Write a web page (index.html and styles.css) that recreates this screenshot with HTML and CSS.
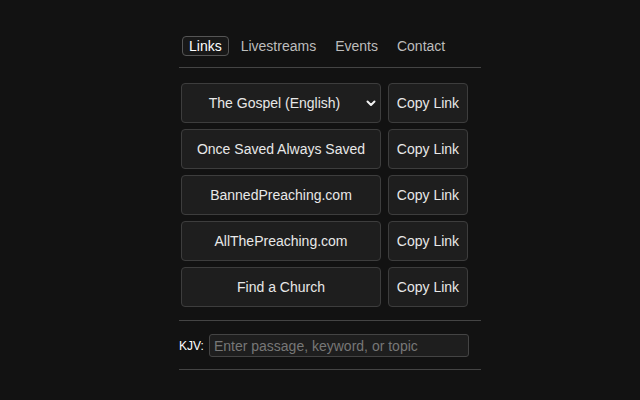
FILE: index.html
```html
<!DOCTYPE html>
<html lang="en">
<head>
    <meta charset="UTF-8">
    <meta name="viewport" content="width=device-width, initial-scale=1.0">
    <title>Preaching Links</title>
    <link rel="stylesheet" href="styles.css">
</head>
<body>

    <div class="popup">
        <nav class="tabs">
            <a href="#" class="tab active">Links</a>
            <a href="#" class="tab">Livestreams</a>
            <a href="#" class="tab">Events</a>
            <a href="#" class="tab">Contact</a>
        </nav>
        <hr>

        <div class="links">
            <div class="row">
                <span class="select-wrap">
                    <select class="btn main">
                        <option>The Gospel (English)</option>
                        <option>The Gospel (Spanish)</option>
                    </select>
                    <!-- chevron drawn over the select -->
                    <svg class="chevron" width="10" height="7" viewBox="0 0 10 7">
                        <path d="M1.5 1.5 L5 5 L8.5 1.5" fill="none" stroke="#f2f2f2" stroke-width="2" stroke-linecap="round" stroke-linejoin="round"/>
                    </svg>
                </span>
                <button class="btn copy">Copy Link</button>
            </div>
            <div class="row">
                <button class="btn main">Once Saved Always Saved</button>
                <button class="btn copy">Copy Link</button>
            </div>
            <div class="row">
                <button class="btn main">BannedPreaching.com</button>
                <button class="btn copy">Copy Link</button>
            </div>
            <div class="row">
                <button class="btn main">AllThePreaching.com</button>
                <button class="btn copy">Copy Link</button>
            </div>
            <div class="row">
                <button class="btn main">Find a Church</button>
                <button class="btn copy">Copy Link</button>
            </div>
        </div>

        <hr class="mid">
        <div class="search">
            <label for="kjv">KJV:</label>
            <input type="text" id="kjv" placeholder="Enter passage, keyword, or topic">
        </div>
        <hr class="end">
    </div>

</body>
</html>
```

FILE: styles.css
```css
body {
    margin: 0;
    background-color: #121212;
    color: #e6e6e6;
    font-family: "Liberation Sans", Arial, sans-serif;
    font-size: 14px;
}
.popup {
    width: 302px;
    margin: 36px 0 0 179px;
}
.tabs {
    display: flex;
    gap: 5px;
    padding-left: 3px;
}
.tab {
    padding: 1px 6px;
    line-height: 16px;
    border: 1px solid transparent;
    border-radius: 4px;
    color: #bdbdbd;
    text-decoration: none;
}
.tab.active {
    border-color: #555;
    background: #181818;
    color: #fff;
}
hr {
    border: 0;
    border-top: 1px solid #444;
    margin: 11px 0 15px;
}
.links {
    display: flex;
    flex-direction: column;
    gap: 6px;
    padding-left: 2px;
}
.row {
    display: flex;
    gap: 7px;
}
.btn {
    box-sizing: border-box;
    height: 40px;
    background-color: #1e1e1e;
    border: 1px solid #3d3d3d;
    border-radius: 4px;
    color: #e8e8e8;
    font-family: inherit;
    font-size: 14px;
    cursor: pointer;
}
.main {
    width: 200px;
}
.copy {
    width: 80px;
    padding: 0;
}
.select-wrap {
    position: relative;
    display: block;
    width: 200px;
}
select.main {
    appearance: none;
    -webkit-appearance: none;
    padding: 0 13px 0 0;
    text-align: center;
    text-align-last: center;
}
.chevron {
    position: absolute;
    right: 5px;
    top: 17px;
    pointer-events: none;
}
hr.mid {
    margin: 13px 0 13px;
}
.search {
    display: flex;
    align-items: center;
    gap: 5px;
}
.search label {
    font-size: 12px;
    color: #fff;
}
.search input {
    box-sizing: border-box;
    width: 260px;
    height: 23px;
    padding: 0 4px;
    background-color: #1e1e1e;
    border: 1px solid #444;
    border-radius: 3px;
    color: #ddd;
    font-family: inherit;
    font-size: 14px;
}
.search input::placeholder {
    color: #777;
}
hr.end {
    margin: 12px 0 0;
}
```
